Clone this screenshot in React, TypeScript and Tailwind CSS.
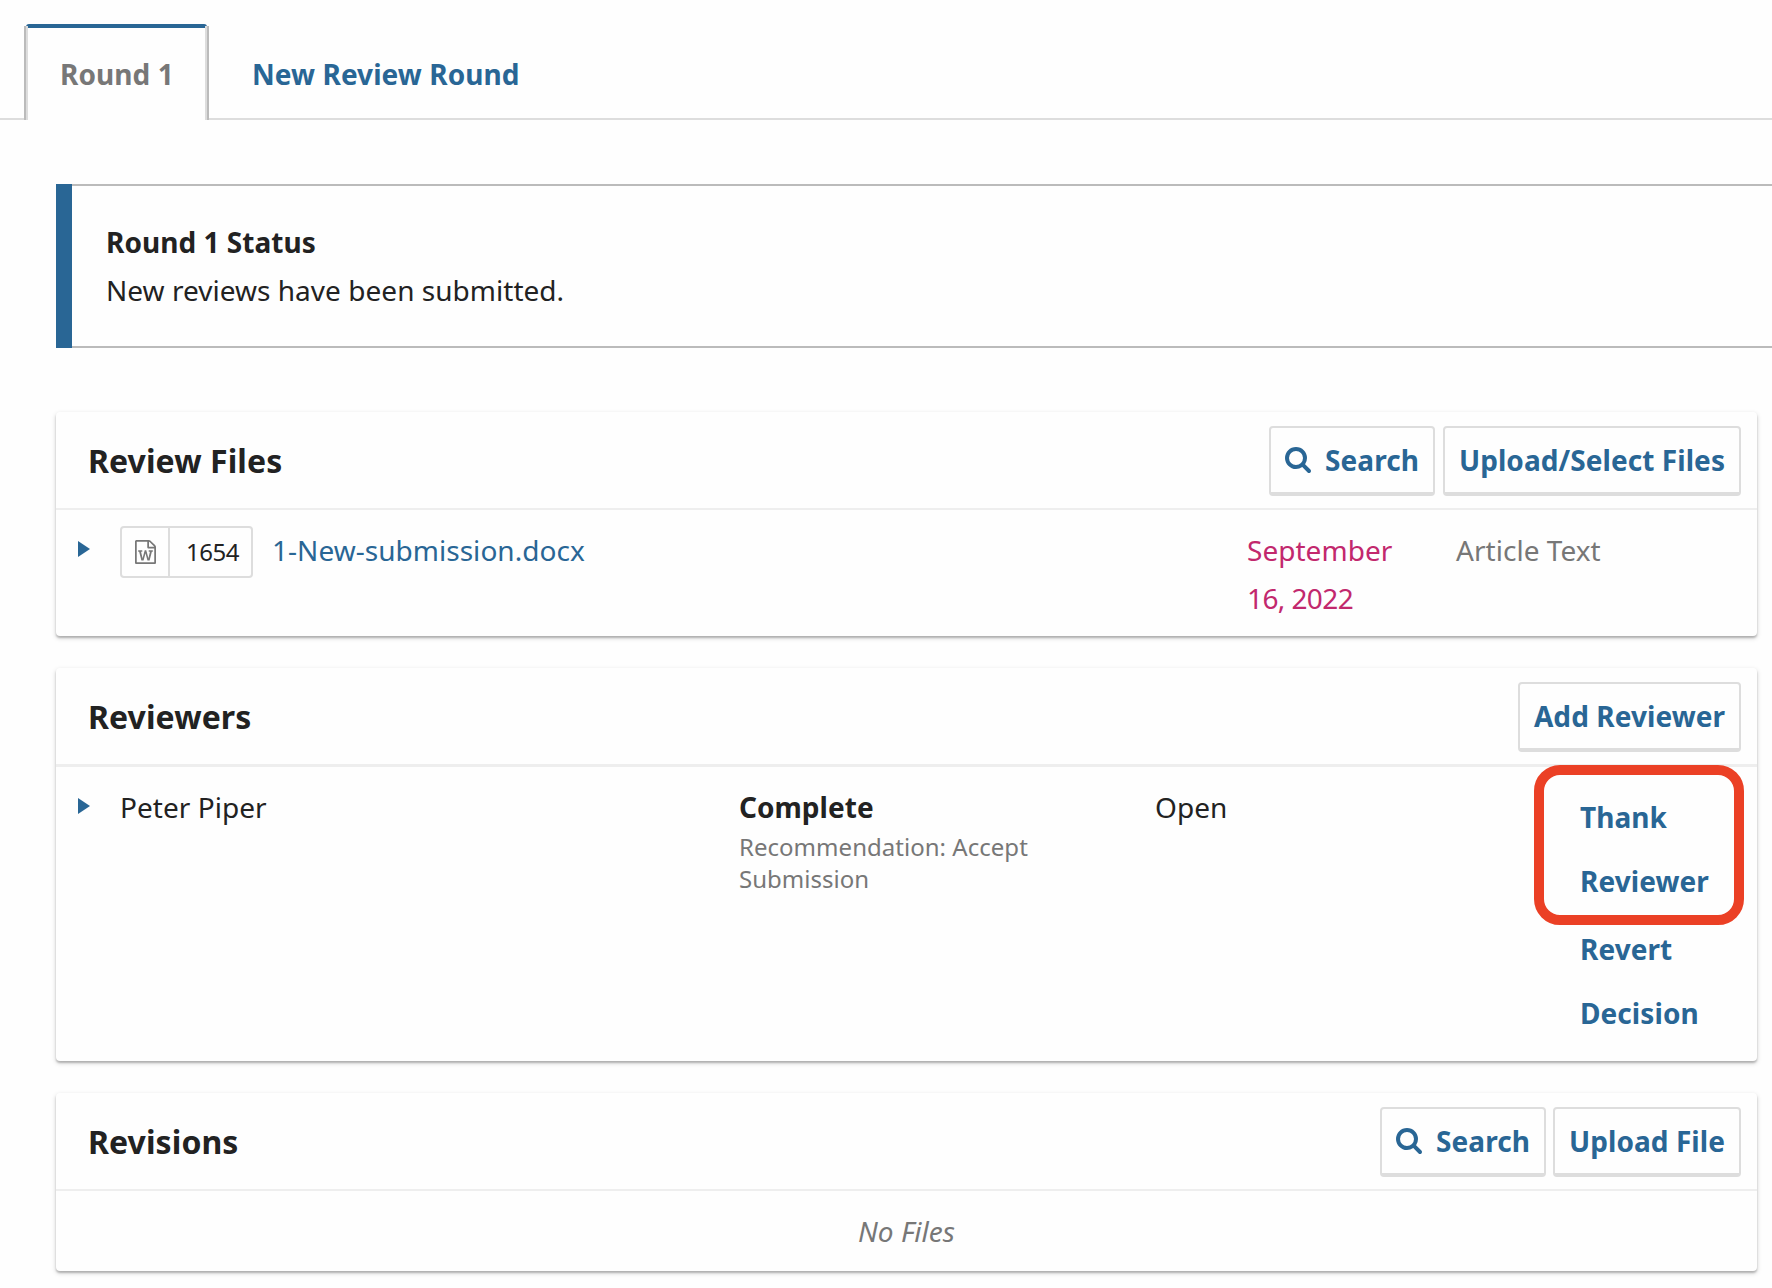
import type { ReactNode } from "react";

function SearchIcon() {
  return (
    <svg width="26" height="26" viewBox="0 0 1664 1664" fill="currentColor" className="mt-px shrink-0">
      <path d="M1152 704q0-185-131.500-316.500t-316.500-131.500-316.500 131.500-131.500 316.500 131.500 316.500 316.500 131.500 316.500-131.500 131.500-316.500zm512 832q0 52-38 90t-90 38q-54 0-90-38l-343-342q-179 124-399 124-143 0-273.500-55.500t-225-150-150-225-55.500-273.500 55.500-273.500 150-225 225-150 273.500-55.500 273.500 55.500 225 150 150 225 55.500 273.500q0 220-124 399l343 343q37 37 37 90z" />
    </svg>
  );
}

function WordIcon() {
  return (
    <svg width="21" height="24" viewBox="0 0 1536 1792" preserveAspectRatio="none" fill="currentColor">
      <path d="M1468 380q28 28 48 76t20 88v1152q0 40-28 68t-68 28h-1344q-40 0-68-28t-28-68v-1600q0-40 28-68t68-28h896q40 0 88 20t76 48zm-444-244v376h376q-10-29-22-41l-313-313q-12-12-41-22zm384 1528v-1024h-416q-40 0-68-28t-28-68v-416h-768v1536h1280zm-1175-896v107h70l164 661h159l128-485q7-20 10-46 2-16 2-24h4l3 24q1 3 3.500 20t5.500 26l128 485h159l164-661h70v-107h-300v107h90l-99 438q-5 20-7 46l-2 21h-4l-3-21q-1-5-4-21t-5-25l-144-545h-114l-144 545q-2 9-4.500 24.500t-3.500 21.500l-4 21h-4l-2-21q-2-26-7-46l-99-438h90v-107h-300z" />
    </svg>
  );
}

function Caret({ className }: { className: string }) {
  return (
    <svg width="12" height="16" viewBox="0 0 12 16" className={"shrink-0 text-[#296695] " + className}>
      <path d="M0 0 12 8 0 16z" fill="currentColor" />
    </svg>
  );
}

function Button({ children, className }: { children: ReactNode; className: string }) {
  return (
    <button
      className={
        "flex h-[70px] items-center justify-center whitespace-nowrap rounded-[4px] border-2 border-b-4 border-[#ddd] pb-px font-bold tracking-[0.07px] text-[#296695] " +
        className
      }
    >
      {children}
    </button>
  );
}

function Card({
  title,
  actions,
  headClass,
  className,
  children,
}: {
  title: string;
  actions: ReactNode;
  headClass: string;
  className: string;
  children: ReactNode;
}) {
  return (
    <section
      className={
        "ml-14 w-[1701px] rounded-[4px] bg-[#fefefe] shadow-[0_2px_2px_rgba(0,0,0,0.2),0_2px_5px_rgba(0,0,0,0.18)] " + className
      }
    >
      <header className={"flex justify-between border-[#eee] pl-8 pr-4 pt-3.5 " + headClass}>
        <h2 className="mt-[11px] text-[32px] font-bold leading-[48px] tracking-[0.08px]">{title}</h2>
        <div className="flex">{actions}</div>
      </header>
      {children}
    </section>
  );
}

export default function App() {
  return (
    <div className="h-[1288px] w-[1772px] overflow-hidden bg-[#fefefe] font-['Noto_Sans',sans-serif] text-[28px] leading-[48px] tracking-[0.03px] text-[#222]">
      <nav className="flex h-[120px] pt-6 font-bold tracking-[0.07px]">
        <div className="w-6 border-b-2 border-[#ddd]" />
        <div className="flex w-[185px] flex-col">
          <div className="mx-0.5 h-1 rounded-t-[3px] bg-[#296695]" />
          <div className="-mt-0.5 flex-1 border-x-2 border-[#bbb]">
            <div className="h-full border-x-2 border-[#ddd] pl-8 pt-6 text-[#777]">Round 1</div>
          </div>
        </div>
        <div className="flex-1 border-b-2 border-[#ddd] pl-[43px] pt-[26px] text-[#296695]">New Review Round</div>
      </nav>

      <div className="ml-14 mt-16 flex h-[164px]">
        <div className="w-4 bg-[#296695]" />
        <div className="flex-1 border-y-2 border-[#bbb] py-8 pl-[34px]">
          <div className="font-bold">Round 1 Status</div>
          <div>New reviews have been submitted.</div>
        </div>
      </div>

      <Card
        title="Review Files"
        className="mt-16 h-[224px]"
        headClass="h-[98px] border-b-2"
        actions={
          <>
            <Button className="mr-2 w-[166px] gap-3.5">
              <SearchIcon />
              Search
            </Button>
            <Button className="w-[298px]">Upload/Select Files</Button>
          </>
        }
      >
        <div className="flex pl-[22px]">
          <Caret className="mt-[31px]" />
          <div className="ml-[30px] mt-4 flex h-[52px] w-[133px] rounded-[4px] border-2 border-[#ddd]">
            <div className="flex w-12 items-center justify-center border-r-2 border-[#ddd] text-[#777]">
              <WordIcon />
            </div>
            <div className="flex-1 pl-4 text-[24px] tracking-[-0.5px]">1654</div>
          </div>
          <div className="ml-[19px] mt-4 w-[975px] text-[#296695]">1-New-submission.docx</div>
          <div className="mt-4 w-[209px] text-[#c2286d]">
            September
            <br />
            <span className="tracking-[-0.6px]">16, 2022</span>
          </div>
          <div className="mt-4 text-[#777]">Article Text</div>
        </div>
      </Card>

      <Card
        title="Reviewers"
        className="mt-8 h-[393px]"
        headClass="h-[99px] border-b-[3px]"
        actions={<Button className="w-[223px]">Add Reviewer</Button>}
      >
        <div className="flex pl-[22px]">
          <Caret className="mt-[31px]" />
          <div className="ml-[30px] mt-4 w-[619px]">Peter Piper</div>
          <div className="mt-4 w-[416px]">
            <div className="font-bold">Complete</div>
            <div className="text-[24px] leading-[32px] text-[#777]">
              Recommendation: Accept
              <br />
              Submission
            </div>
          </div>
          <div className="mt-4 w-[425px]">Open</div>
          <div className="relative mt-[18px] flex flex-col gap-1 font-bold leading-[64px] tracking-[0.07px] text-[#296695]">
            <div className="absolute -left-[46px] -top-[20px] h-[160px] w-[210px] rounded-[26px] border-[10px] border-[#eb4025]" />
            <a>
              Thank
              <br />
              Reviewer
            </a>
            <a>
              Revert
              <br />
              Decision
            </a>
          </div>
        </div>
      </Card>

      <Card
        title="Revisions"
        className="mt-8 h-[178px]"
        headClass="h-[98px] border-b-2"
        actions={
          <>
            <Button className="mr-[7px] w-[166px] gap-3.5">
              <SearchIcon />
              Search
            </Button>
            <Button className="w-[188px]">Upload File</Button>
          </>
        }
      >
        <div className="pt-4 text-center italic text-[#777]">No Files</div>
      </Card>
    </div>
  );
}
